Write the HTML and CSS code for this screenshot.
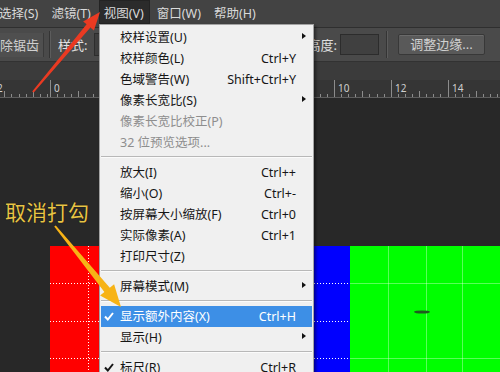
FILE: index.html
```html
<!DOCTYPE html>
<html lang="zh-CN">
  <head>
    <meta charset="UTF-8" />
    <meta name="viewport" content="width=device-width, initial-scale=1.0" />
    <title>视图菜单 - 显示额外内容</title>
    <link rel="stylesheet" href="styles.css">
  </head>
  <body>
    <div class="app">
      <div class="menubar">
        <span class="mb-item first">选择(S)</span>
        <span class="mb-item">滤镜(T)</span>
        <span class="mb-item open">视图(V)</span>
        <span class="mb-item">窗口(W)</span>
        <span class="mb-item">帮助(H)</span>
      </div>

      <div class="optbar">
        <div class="opt-group">
          <span class="opt-btn cut">消除锯齿</span>
          <span class="vsep"></span>
          <span class="opt-label">样式:</span>
          <span class="opt-select"></span>
        </div>
        <div class="opt-group">
          <span class="opt-label">高度:</span>
          <span class="opt-input"></span>
          <span class="vsep wide"></span>
          <span class="opt-btn refine">调整边缘...</span>
        </div>
      </div>

      <div class="tabgap"></div>

      <div class="ruler">
        <span class="rl" style="left:-7px">2</span>
        <span class="rl" style="left:50px">0</span>
        <span class="rl" style="left:334px">10</span>
        <span class="rl" style="left:391px">12</span>
        <span class="rl" style="left:448px">14</span>
      </div>

      <div class="canvas">
        <div class="doc">
          <div class="col red"></div>
          <div class="col blue"></div>
          <div class="col green"></div>
          <svg class="grid" width="450" height="126" viewBox="0 0 450 126">
            <g stroke="#fff" stroke-width="1" stroke-dasharray="1 2">
              <line x1="0" y1="37.5" x2="300" y2="37.5" />
              <line x1="0" y1="75.5" x2="300" y2="75.5" />
              <line x1="0" y1="112.5" x2="300" y2="112.5" />
              <line x1="38.5" y1="0" x2="38.5" y2="126" />
            </g>
            <g stroke="rgba(255,255,255,0.35)" stroke-width="1">
              <line x1="338.5" y1="0" x2="338.5" y2="126" />
              <line x1="376.5" y1="0" x2="376.5" y2="126" />
              <line x1="412.5" y1="0" x2="412.5" y2="126" />
              <line x1="300" y1="37.5" x2="450" y2="37.5" />
              <line x1="300" y1="112.5" x2="450" y2="112.5" />
            </g>
            <ellipse cx="372" cy="66" rx="8" ry="1.6" fill="#1f5a1f" />
          </svg>
        </div>
      </div>
    </div>

    <div class="menu">
      <div class="mi"><span></span><span>校样设置(U)</span><span></span><span class="ar"></span></div>
      <div class="mi"><span></span><span>校样颜色(L)</span><span class="sc">Ctrl+Y</span><span></span></div>
      <div class="mi"><span></span><span>色域警告(W)</span><span class="sc">Shift+Ctrl+Y</span><span></span></div>
      <div class="mi"><span></span><span>像素长宽比(S)</span><span></span><span class="ar"></span></div>
      <div class="mi off"><span></span><span>像素长宽比校正(P)</span><span></span><span></span></div>
      <div class="mi off"><span></span><span>32 位预览选项...</span><span></span><span></span></div>
      <div class="msep"></div>
      <div class="mi"><span></span><span>放大(I)</span><span class="sc">Ctrl++</span><span></span></div>
      <div class="mi"><span></span><span>缩小(O)</span><span class="sc">Ctrl+-</span><span></span></div>
      <div class="mi"><span></span><span>按屏幕大小缩放(F)</span><span class="sc">Ctrl+0</span><span></span></div>
      <div class="mi"><span></span><span>实际像素(A)</span><span class="sc">Ctrl+1</span><span></span></div>
      <div class="mi"><span></span><span>打印尺寸(Z)</span><span></span><span></span></div>
      <div class="msep"></div>
      <div class="mi"><span></span><span>屏幕模式(M)</span><span></span><span class="ar"></span></div>
      <div class="msep"></div>
      <div class="mi hot">
        <span class="ck"><svg width="10" height="9" viewBox="0 0 10 9"><path d="M1 4.5 L3.8 7.5 L9 1" fill="none" stroke="currentColor" stroke-width="2"/></svg></span>
        <span>显示额外内容(X)</span><span class="sc">Ctrl+H</span><span></span>
      </div>
      <div class="mi"><span></span><span>显示(H)</span><span></span><span class="ar"></span></div>
      <div class="msep"></div>
      <div class="mi">
        <span class="ck"><svg width="10" height="9" viewBox="0 0 10 9"><path d="M1 4.5 L3.8 7.5 L9 1" fill="none" stroke="currentColor" stroke-width="2"/></svg></span>
        <span>标尺(R)</span><span class="sc">Ctrl+R</span><span></span>
      </div>
    </div>

    <div class="callout">取消打勾</div>

    <!-- annotation arrows drawn over the screenshot -->
    <svg class="arrows" width="500" height="372" viewBox="0 0 500 372">
      <polygon fill="#ea3a22" points="32.2,91.4 86.6,24.3 83.1,21.4 100,12 93.9,30.4 90.4,27.5 33.8,92.6" />
      <polygon fill="#f7b316" points="54.2,226.6 104.4,292.1 100.1,295.6 121,307 114.1,284.2 109.8,287.7 55.8,225.4" />
    </svg>
  </body>
</html>
```

FILE: styles.css
```css
body {
  margin: 0;
  width: 500px;
  height: 372px;
  overflow: hidden;
  position: relative;
  background: #282828;
  font-family: "Noto Sans", "Noto Sans CJK SC", sans-serif;
  font-size: 12px;
}

.app {
  display: flex;
  flex-direction: column;
  height: 372px;
}

/* top menu bar */
.menubar {
  height: 27px;
  display: flex;
  gap: 2px;
  background: #434343;
  border-bottom: 1px solid #2f2f2f;
  color: #dadada;
  font-size: 12.5px;
}

.mb-item {
  height: 24px;
  line-height: 27px;
  padding: 0 6px 0 5px;
  white-space: nowrap;
}

.mb-item.first {
  margin-left: -6px;
}

.mb-item.open {
  background: #2b2b2b;
  box-shadow: inset 0 0 0 1px #232323;
}

/* options bar */
.optbar {
  height: 33px;
  display: flex;
  align-items: center;
  justify-content: space-between;
  padding-right: 15px;
  background: #4a4a4a;
  border-bottom: 1px solid #323232;
  color: #e0e0e0;
  font-size: 13px;
}

.opt-group {
  display: flex;
  align-items: center;
}

.opt-btn {
  height: 24px;
  line-height: 24px;
  padding: 0 4px;
  color: #d0d0d0;
  white-space: nowrap;
}

.opt-btn.cut {
  margin-left: -17px;
  background: #4f4f4f;
  border-right: 1px solid #3a3a3a;
}

.opt-btn.refine {
  width: 85px;
  height: 19px;
  line-height: 19px;
  padding: 0;
  margin-left: 10px;
  text-align: center;
  background: #595959;
  border: 1px solid #383838;
  box-shadow: inset 0 1px 0 #6a6a6a;
  border-radius: 2px;
}

.vsep {
  width: 1px;
  height: 27px;
  margin: 0 7px 0 5px;
  background: #343434;
  border-right: 1px solid #5c5c5c;
}

.vsep.wide {
  margin: 0 0 0 7px;
}

.opt-label {
  white-space: nowrap;
}

.opt-select {
  width: 60px;
  height: 21px;
  margin-left: 6px;
  background: #3e3e3e;
  border: 1px solid #2d2d2d;
}

.opt-input {
  width: 37px;
  height: 19px;
  margin-left: 3px;
  background: #404040;
  border: 1px solid #2c2c2c;
}

.tabgap {
  height: 18px;
  background: #3b3b3b;
}

/* ruler */
.ruler {
  height: 17px;
  position: relative;
  background: #353535;
  border-bottom: 1px solid #5e5e5e;
}

.ruler::before {
  content: "";
  position: absolute;
  left: 0;
  right: 0;
  bottom: 0;
  height: 3px;
  background: repeating-linear-gradient(to right, #8c8c8c 0 1px, transparent 1px 7.1px);
  background-position: 50px 0;
}

.ruler::after {
  content: "";
  position: absolute;
  left: 0;
  right: 0;
  bottom: 0;
  height: 6px;
  background: repeating-linear-gradient(to right, #8c8c8c 0 1px, transparent 1px 28.4px);
  background-position: 50px 0;
}

.rl {
  position: absolute;
  top: 0;
  height: 17px;
  padding-left: 3px;
  border-left: 1px solid #8c8c8c;
  font-size: 10px;
  line-height: 16px;
  color: #cfcfcf;
}

/* document canvas */
.canvas {
  flex: 1;
  padding: 148px 0 0 50px;
}

.doc {
  position: relative;
  width: 450px;
  height: 126px;
  display: flex;
}

.col {
  flex: 1;
}

.red {
  background: #ff0000;
}

.blue {
  background: #0000ff;
}

.green {
  background: #00ff00;
}

.grid {
  position: absolute;
  left: 0;
  top: 0;
}

/* view dropdown */
.menu {
  position: absolute;
  left: 99px;
  top: 24px;
  width: 215px;
  height: 360px;
  box-sizing: border-box;
  padding-top: 2px;
  background: #f0f0f0;
  border: 1px solid #a3a3a3;
  box-shadow: 2px 2px 3px rgba(0, 0, 0, 0.45);
  color: #161616;
  font-size: 12.5px;
  z-index: 5;
}

.mi {
  display: grid;
  grid-template-columns: 19px 1fr auto 16px;
  align-items: center;
  height: 21px;
  line-height: 21px;
  margin: 0 1px;
  white-space: nowrap;
}

.mi.off {
  color: #8e8e8e;
}

.mi.hot {
  background: #3d8fe6;
  color: #fff;
}

.ck {
  display: flex;
  padding-left: 3px;
}

.ar {
  width: 0;
  height: 0;
  margin: 0 0 4px 6px;
  border-left: 4px solid #111;
  border-top: 3.5px solid transparent;
  border-bottom: 3.5px solid transparent;
}

.msep {
  height: 0;
  margin: 3px 1px 4px;
  border-top: 1px solid #b8b8b8;
  border-bottom: 1px solid #fbfbfb;
}

.callout {
  position: absolute;
  left: 5px;
  top: 200px;
  font-family: "Noto Sans CJK SC", sans-serif;
  font-size: 21px;
  line-height: 22px;
  color: #e7c446;
  text-shadow: 0 0 1px #000;
  z-index: 6;
}

.arrows {
  position: absolute;
  left: 0;
  top: 0;
  z-index: 10;
}
```
